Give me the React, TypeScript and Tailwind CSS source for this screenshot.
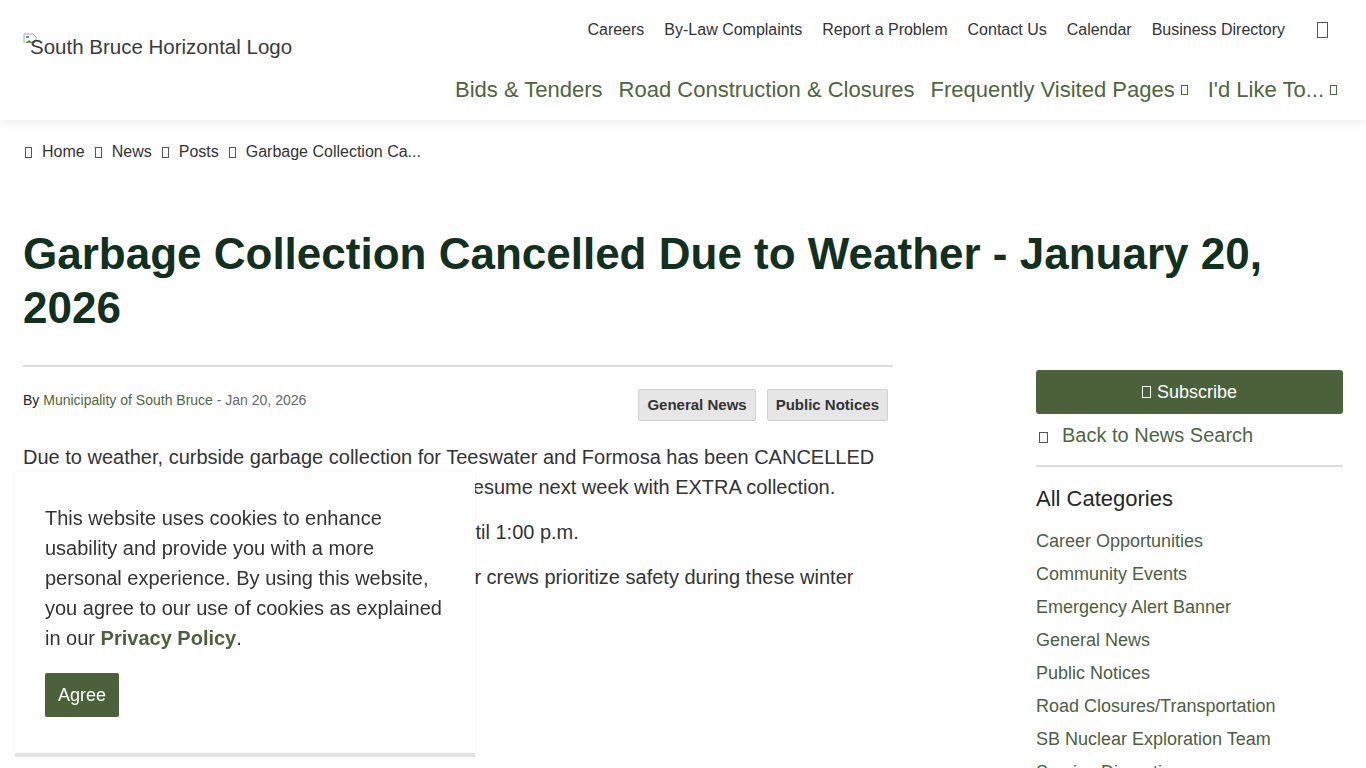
import React from "react";

const Tofu = ({ className = "" }: { className?: string }) => (
  <span className={`inline-block border border-current ${className}`} />
);

const utilityLinks = ["Careers", "By-Law Complaints", "Report a Problem", "Contact Us", "Calendar", "Business Directory"];

const categories = [
  "Career Opportunities",
  "Community Events",
  "Emergency Alert Banner",
  "General News",
  "Public Notices",
  "Road Closures/Transportation",
  "SB Nuclear Exploration Team",
  "Service Disruptions",
];

const App = () => {
  return (
    <div className="min-h-screen bg-white font-['Liberation_Sans',Arial,sans-serif] text-[#333]">
      {/* Header */}
      <header className="h-[120px] bg-white shadow-[0_4px_8px_rgba(0,0,0,0.06)] px-[23px] flex justify-between">
        <div className="pt-[33px] flex items-start">
          <svg width="16" height="16" viewBox="0 0 16 16">
            <path d="M1 1h9l3 3v4" fill="none" stroke="#aaa" strokeWidth="1" />
            <path d="M1 1v9" fill="none" stroke="#aaa" strokeWidth="1" />
            <path d="M2 10l4-3 3 2 3-2v3H2z" fill="#6a9a4c" />
            <rect x="3" y="3" width="3" height="2" fill="#5b8ec9" />
          </svg>
          <span className="text-[20.5px] leading-[28px] text-[#3a3a3a] -ml-[9px]">South Bruce Horizontal Logo</span>
        </div>
        <div className="flex flex-col items-end">
          <nav className="flex items-center h-[59px] gap-[20px] text-[16px] text-[#333] pr-[15px]">
            {utilityLinks.map((l) => (
              <a key={l}>{l}</a>
            ))}
            <Tofu className="w-[11px] h-[16px] ml-[12px] text-[#555]" />
          </nav>
          <nav className="flex items-center h-[61px] gap-[16px] text-[22px] text-[#4c673c] pr-[6px]">
            <a>Bids &amp; Tenders</a>
            <a>Road Construction &amp; Closures</a>
            <a className="flex items-center gap-[6px]">
              Frequently Visited Pages <Tofu className="w-[7px] h-[10px]" />
            </a>
            <a className="flex items-center gap-[6px] ml-[4px]">
              I'd Like To... <Tofu className="w-[7px] h-[10px]" />
            </a>
          </nav>
        </div>
      </header>

      <div className="px-[23px]">
        {/* Breadcrumb */}
        <div className="flex items-center gap-[10px] h-[63px] pt-[1px] text-[16px] text-[#333]">
          <Tofu className="w-[7px] h-[11px] ml-[2px] text-[#555]" />
          <span>Home</span>
          <Tofu className="w-[7px] h-[11px] text-[#555]" />
          <span>News</span>
          <Tofu className="w-[7px] h-[11px] text-[#555]" />
          <span>Posts</span>
          <Tofu className="w-[7px] h-[11px] text-[#555]" />
          <span>Garbage Collection Ca...</span>
        </div>

        {/* Title */}
        <h1 className="mt-[44px] text-[44px] leading-[54px] font-bold text-[#11301d]">
          Garbage Collection Cancelled Due to Weather - January 20, 2026
        </h1>

        <div className="flex justify-between mt-[30px]">
          {/* Main column */}
          <main className="w-[870px]">
            <div className="border-t-2 border-[#ddd]" />
            <div className="flex justify-between items-start mt-[22px]">
              <p className="text-[14px] leading-[20px] mt-[1px] text-[#222]">
                By <span className="text-[#4c673c]">Municipality of South Bruce</span> <span className="text-[#666]">- Jan 20, 2026</span>
              </p>
              <div className="flex gap-[11px] pr-[5px]">
                <span className="h-[32px] px-[8px] flex items-center bg-[#e6e6e6] border border-[#d0d0d0] rounded-[2px] text-[15px] font-bold text-[#333]">
                  General News
                </span>
                <span className="h-[32px] px-[8px] flex items-center bg-[#e6e6e6] border border-[#d0d0d0] rounded-[2px] text-[15px] font-bold text-[#333]">
                  Public Notices
                </span>
              </div>
            </div>
            <div className="mt-[21px] text-[20px] leading-[30px] text-[#333] space-y-[15px]">
              <p>
                Due to weather, curbside garbage collection for Teeswater and Formosa has been CANCELLED today. Regular curbside collection is scheduled to resume next week with EXTRA collection.
              </p>
              <p>The South Bruce Landfill will also remain closed until 1:00 p.m.</p>
              <p>Thank you for your patience and cooperation as our crews prioritize safety during these winter conditions.</p>
            </div>
          </main>

          {/* Sidebar */}
          <aside className="w-[307px] mt-[5px]">
            <button className="w-full h-[44px] bg-[#4a6139] text-white text-[18px] rounded-[3px] flex items-center justify-center gap-[6px]">
              <Tofu className="w-[9px] h-[12px]" />
              Subscribe
            </button>
            <a className="flex items-center gap-[14px] mt-[6px] h-[30px] text-[20px] text-[#4c673c]">
              <Tofu className="w-[9px] h-[11px] ml-[3px] mt-[4px] text-[#555]" />
              Back to News Search
            </a>
            <div className="border-t-2 border-[#ddd] mt-[15px]" />
            <h2 className="text-[22px] leading-[30px] text-[#1e2a1e] mt-[17px]">All Categories</h2>
            <ul className="mt-[11px] text-[18px] leading-[33px] text-[#4c6041]">
              {categories.map((c) => (
                <li key={c}>{c}</li>
              ))}
            </ul>
          </aside>
        </div>
      </div>

      {/* Cookie banner */}
      <div className="fixed left-[15px] bottom-[11px] w-[460px] bg-white border-b-4 border-[#e3e3e3] shadow-[0_0_4px_rgba(0,0,0,0.05)] px-[30px] pt-[31px] pb-[36px]">
        <p className="text-[20px] leading-[30px] text-[#333]">
          This website uses cookies to enhance usability and provide you with a more personal experience. By using this website, you agree to our use of cookies as explained in our{" "}
          <a className="font-bold text-[#4a6139]">Privacy Policy</a>.
        </p>
        <button className="mt-[20px] h-[44px] w-[74px] bg-[#4a6139] text-white text-[18px] rounded-[2px]">Agree</button>
      </div>
    </div>
  );
};

export default App;
